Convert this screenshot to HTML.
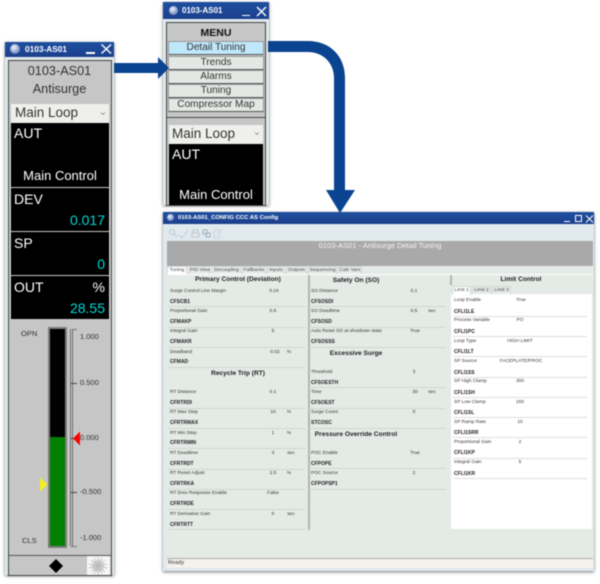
<!DOCTYPE html>
<html><head><meta charset="utf-8"><style>
html,body{margin:0;padding:0;background:#fff}
#r{position:relative;width:600px;height:584px;overflow:hidden;font-family:"Liberation Sans",sans-serif;filter:blur(.5px);background:#fff}
#r div,#r span,#r svg{position:absolute}
.t{white-space:nowrap;line-height:8px;font-size:4.8px;color:#333}
.b{font-weight:bold;color:#222;font-size:5px}
.c{transform:translateX(-50%)}
.h{white-space:nowrap;font-weight:bold;font-size:6.6px;line-height:10px;color:#222;transform:translateX(-50%)}
.l{height:1px;background:#d0d6d2}
.lw{height:1px;background:#dcdedc}
.tb{background:linear-gradient(#1f4fa0,#1b3f8c)}
.big{white-space:nowrap;color:#fff;font-size:14px;line-height:16px}
.cy{color:#00d8dc;white-space:nowrap;font-size:14px;line-height:16px}
.g{white-space:nowrap;color:#333;font-size:12.7px;line-height:15px}
.s{white-space:nowrap;color:#333;font-size:7.5px;line-height:10px}
.m{left:168px;width:96px;background:#e4e8e4;border:1px solid #9a9a9a;border-bottom-color:#555;box-sizing:border-box;height:14px;text-align:center;font-size:10.1px;line-height:12px;color:#333;white-space:nowrap}
.tab{top:266px;height:8px;background:#e6ebe7;border:1px solid #d2d7d3;border-bottom:0;box-sizing:border-box;text-align:center;font-size:4.9px;line-height:7px;color:#444;white-space:nowrap}
</style></head><body><div id="r">

<!-- LEFT WINDOW -->
<div style="left:5px;top:42px;width:109px;height:533px;background:#dfe9ee;box-shadow:0 1px 3px rgba(0,0,0,.55)"></div>
<div class="tb" style="left:5px;top:42px;width:109px;height:15px"></div>
<div style="left:10px;top:44px;width:10px;height:10px;border-radius:50%;background:radial-gradient(circle at 40% 35%,#f2f4fa,#8da0cc 55%,#4c64a6)"></div>
<span style="left:25px;top:44px;font-size:8.3px;line-height:11px;font-weight:bold;color:#fff;white-space:nowrap">0103-AS01</span>
<div style="left:86px;top:52px;width:9px;height:1.5px;background:#fff"></div>
<svg style="left:100px;top:43px" width="12" height="12"><path d="M1.5 1.5L11 10.500M11 1.500L1.500 10.500" stroke="#fff" stroke-width="1.4"/></svg>
<div style="left:9px;top:61px;width:102px;height:514px;background:#c6c6c6;box-shadow:0 0 0 1px #444"></div>
<span class="g c" style="left:59.5px;top:64px">0103-AS01</span>
<span class="g c" style="left:59.5px;top:82px">Antisurge</span>
<div style="left:11px;top:104px;width:98px;height:19px;background:#efefec"></div>
<span class="g" style="left:15px;top:105px;font-size:13.5px">Main Loop</span>
<svg style="left:100px;top:111px" width="6" height="5"><path d="M1 1.5L3 3.5L5 1.5" fill="none" stroke="#777" stroke-width=".7"/></svg>
<div style="left:11px;top:123px;width:98px;height:64px;background:#000"></div>
<span class="big" style="left:14px;top:125px">AUT</span>
<span class="big c" style="left:60px;top:168px;font-size:13px">Main Control</span>
<div style="left:11px;top:188px;width:98px;height:43px;background:#000"></div>
<span class="big" style="left:14px;top:191px">DEV</span>
<span class="cy" style="right:495px;top:212px">0.017</span>
<div style="left:11px;top:232px;width:98px;height:43px;background:#000"></div>
<span class="big" style="left:14px;top:235px">SP</span>
<span class="cy" style="right:495px;top:256px">0</span>
<div style="left:11px;top:276px;width:98px;height:43px;background:#000"></div>
<span class="big" style="left:14px;top:279px">OUT</span>
<span class="big" style="right:495px;top:279px">%</span>
<span class="cy" style="right:495px;top:300px">28.55</span>
<!-- bar -->
<div style="left:48px;top:327px;width:19px;height:221px;background:#7c7c7c"></div>
<div style="left:50px;top:329px;width:15px;height:108px;background:#000"></div>
<div style="left:50px;top:437px;width:15px;height:109px;background:#007f00"></div>
<div style="left:70px;top:329px;width:3px;height:217px;background:#d8d8d8;border-left:1px solid #666;border-right:1px solid #666;box-sizing:border-box"></div>
<div style="left:73px;top:329px;width:4px;height:1px;background:#777"></div>
<div style="left:71px;top:383px;width:6px;height:1px;background:#444"></div>
<div style="left:71px;top:438px;width:6px;height:1px;background:#444"></div>
<div style="left:71px;top:492px;width:6px;height:1px;background:#444"></div>
<div style="left:71px;top:546px;width:6px;height:1px;background:#777"></div>
<svg style="left:73px;top:431px" width="8" height="15"><path d="M0 7.5L7 .5V14.5Z" fill="#f00"/></svg>
<svg style="left:40px;top:477px" width="8" height="15"><path d="M7.5 7.5L0 .5V14.5Z" fill="#f4ee20"/></svg>
<span class="s" style="left:21px;top:329px">OPN</span>
<span class="s" style="left:22px;top:536px">CLS</span>
<span class="s" style="left:80px;top:332px">1.000</span>
<span class="s" style="left:80px;top:378px">0.500</span>
<span class="s" style="left:80px;top:433px">0.000</span>
<span class="s" style="left:80px;top:487px">-0.500</span>
<span class="s" style="left:80px;top:533px">-1.000</span>
<div style="left:9px;top:555px;width:102px;height:1px;background:#555"></div>
<svg style="left:49px;top:558px" width="15" height="16"><path d="M7 1L14 8L7 15L0 8Z" fill="#000"/></svg>
<svg style="left:87px;top:556px" width="23" height="19"><rect width="23" height="19" fill="#f6f6f6"/><g stroke="#b4b4b4" stroke-width=".8"><path d="M11 10L11 1M11 10L15 2M11 10L18 4M11 10L20 8M11 10L20 12M11 10L18 16M11 10L15 18M11 10L11 19M11 10L7 18M11 10L4 16M11 10L2 12M11 10L2 8M11 10L4 4M11 10L7 2"/></g><circle cx="11" cy="10" r="6" fill="#bdbdbd" opacity=".6"/></svg>

<!-- MIDDLE WINDOW -->
<div style="left:163px;top:2px;width:106px;height:203px;background:#dfe9ee;box-shadow:0 1px 3px rgba(0,0,0,.55)"></div>
<div class="tb" style="left:163px;top:2px;width:106px;height:17px"></div>
<div style="left:169px;top:6px;width:9px;height:9px;border-radius:50%;background:radial-gradient(circle at 40% 35%,#f2f4fa,#8da0cc 55%,#4c64a6)"></div>
<span style="left:182px;top:5px;font-size:8px;line-height:11px;font-weight:bold;color:#fff;white-space:nowrap">0103-AS01</span>
<div style="left:242px;top:14.500px;width:8px;height:1.5px;background:#fff"></div>
<svg style="left:256px;top:6px" width="11" height="11"><path d="M1 1L10 10M10 1L1 10" stroke="#fff" stroke-width="1.4"/></svg>
<div style="left:167px;top:23px;width:98px;height:182px;background:#c6c6c6;box-shadow:0 0 0 1px #444"></div>
<span class="c" style="left:216px;top:27px;font-size:10.5px;line-height:12px;font-weight:bold;color:#111">MENU</span>
<div class="m" style="top:41px;background:#bfe8fb">Detail Tuning</div>
<div class="m" style="top:56px">Trends</div>
<div class="m" style="top:70px">Alarms</div>
<div class="m" style="top:84px">Tuning</div>
<div class="m" style="top:98px">Compressor Map</div>
<div style="left:167px;top:117px;width:98px;height:1px;background:#444"></div>
<div style="left:169px;top:125px;width:94px;height:19px;background:#efefec"></div>
<span class="g" style="left:172px;top:126px;font-size:13.5px">Main Loop</span>
<svg style="left:254px;top:131px" width="6" height="5"><path d="M1 1.5L3 3.5L5 1.5" fill="none" stroke="#777" stroke-width=".7"/></svg>
<div style="left:169px;top:144px;width:94px;height:61px;background:#000"></div>
<span class="big" style="left:172px;top:146px">AUT</span>
<span class="big c" style="left:216px;top:187px;font-size:13px">Main Control</span>

<!-- ARROWS -->
<svg style="left:0;top:0" width="600" height="584"><path d="M114 63H158V57L169 68L158 79V73H114Z" fill="#0a4490"/><path d="M268 41H308C330 41 345 56 345 78V190H355L340 213L326 190H334V78C334 62 322 52 308 52H268Z" fill="#0a4490"/></svg>

<!-- CONFIG WINDOW -->
<div style="left:163px;top:212px;width:431px;height:359px;background:#dfe9ee;box-shadow:0 1px 3px rgba(0,0,0,.55)"></div>
<div class="tb" style="left:163px;top:212px;width:431px;height:12px"></div>
<div style="left:167px;top:214px;width:7px;height:7px;border-radius:50%;background:radial-gradient(circle at 40% 35%,#f2f4fa,#8da0cc 55%,#4c64a6)"></div>
<span style="left:178px;top:214px;font-size:5.9px;line-height:8px;font-weight:bold;color:#fff;white-space:nowrap">0103-AS01_CONFIG CCC AS Config</span>
<div style="left:564px;top:221px;width:6px;height:1px;background:#fff"></div>
<div style="left:575px;top:215px;width:7px;height:7px;border:1px solid #fff;box-sizing:border-box"></div>
<svg style="left:585px;top:215px" width="9" height="8"><path d="M1 .5L8 7.500M8 .5L1 7.500" stroke="#fff" stroke-width="1"/></svg>
<svg style="left:168px;top:228px" width="58" height="12"><g fill="none" stroke="#c0c8cc" stroke-width="1"><circle cx="4" cy="4" r="2.500"/><path d="M6 6L9 9"/><path d="M11 7L14 10L20 2" stroke="#c4ccd2"/><path d="M24 5H31V9H24ZM25 5V2H30V5"/><rect x="35" y="2" width="4" height="4" stroke="#9fb2c4"/><rect x="38" y="5" width="4" height="4" stroke="#9fb2c4"/><path d="M46 2H51V10H46ZM50 7L54 2" stroke="#d0d6da"/></g></svg>
<div style="left:167px;top:241px;width:426px;height:25px;background:#a9a9a9"></div>
<span class="c" style="left:380px;top:241px;font-size:7.6px;line-height:10px;color:#f4f4f4;white-space:nowrap">0103-AS01 - Antisurge Detail Tuning</span>
<div style="left:167px;top:266px;width:426px;height:292px;background:#e4eae6"></div>
<div class="tab" style="left:167px;width:20px;background:#fff;height:9px">Tuning</div>
<div class="tab" style="left:189px;width:21px">PID View</div>
<div class="tab" style="left:212px;width:29px">Decoupling</div>
<div class="tab" style="left:242px;width:24px">Fallbacks</div>
<div class="tab" style="left:267px;width:18px">Inputs</div>
<div class="tab" style="left:286px;width:21px">Outputs</div>
<div class="tab" style="left:308px;width:29px">Sequencing</div>
<div class="tab" style="left:338px;width:24px">Calc Vars</div>
<div style="left:167px;top:274px;width:426px;height:1px;background:#fff"></div>
<div style="left:308px;top:275px;width:1.500px;height:255px;background:#b0b5b2"></div>
<div style="left:450px;top:275px;width:1.500px;height:10px;background:#b0b5b2"></div>
<div style="left:451px;top:294px;width:141px;height:235px;background:#fff"></div>
<div style="left:167px;top:558px;width:426px;height:10px;background:#f5f1ec;border-top:1px solid #aaa;box-sizing:border-box"></div>
<span class="t" style="left:168px;top:559px;font-size:5.6px">Ready</span>

<!-- column 1 -->
<span class="h" style="left:238px;top:275px">Primary Control (Deviation)</span>
<span class="t" style="left:170px;top:288px">Surge Control Line Margin</span><span class="t c" style="left:274px;top:288px">0.24</span>
<span class="t b" style="left:170px;top:298px">CFSCB1</span><div class="l" style="left:168px;top:306px;width:137px"></div>
<span class="t" style="left:170px;top:308px">Proportional Gain</span><span class="t c" style="left:273px;top:308px">0.6</span>
<span class="t b" style="left:170px;top:318px">CFMAKP</span><div class="l" style="left:168px;top:327px;width:137px"></div>
<span class="t" style="left:170px;top:328px">Integral Gain</span><span class="t c" style="left:273px;top:328px">5</span>
<span class="t b" style="left:170px;top:338px">CFMAKR</span><div class="l" style="left:168px;top:347px;width:137px"></div>
<span class="t" style="left:170px;top:349px">Deadband</span><span class="t c" style="left:275px;top:349px">0.02</span><span class="t c" style="left:289px;top:349px">%</span>
<span class="t b" style="left:170px;top:358px">CFMAD</span><div class="l" style="left:168px;top:367px;width:137px"></div>
<span class="h" style="left:238px;top:369px">Recycle Trip (RT)</span>
<span class="t" style="left:170px;top:389px">RT Distance</span><span class="t c" style="left:273px;top:389px">0.1</span>
<span class="t b" style="left:170px;top:399px">CFRTRDI</span><div class="l" style="left:168px;top:408px;width:137px"></div>
<span class="t" style="left:170px;top:409px">RT Max Step</span><span class="t c" style="left:273px;top:409px">10</span><span class="t c" style="left:289px;top:409px">%</span>
<span class="t b" style="left:170px;top:419px">CFRTRMAX</span><div class="l" style="left:168px;top:428px;width:137px"></div>
<span class="t" style="left:170px;top:430px">RT Min Step</span><span class="t c" style="left:273px;top:430px">1</span><span class="t c" style="left:289px;top:430px">%</span>
<span class="t b" style="left:170px;top:439px">CFRTRMIN</span><div class="l" style="left:168px;top:448px;width:137px"></div>
<span class="t" style="left:170px;top:450px">RT Deadtime</span><span class="t c" style="left:273px;top:450px">3</span><span class="t c" style="left:291px;top:450px">sec</span>
<span class="t b" style="left:170px;top:460px">CFRTRDT</span><div class="l" style="left:168px;top:469px;width:137px"></div>
<span class="t" style="left:170px;top:470px">RT Reset Adjust</span><span class="t c" style="left:273px;top:470px">2.5</span><span class="t c" style="left:289px;top:470px">%</span>
<span class="t b" style="left:170px;top:480px">CFRTRKA</span><div class="l" style="left:168px;top:489px;width:137px"></div>
<span class="t" style="left:170px;top:490px">RT Drev Response Enable</span><span class="t c" style="left:273px;top:490px">False</span>
<span class="t b" style="left:170px;top:500px">CFRTRDE</span><div class="l" style="left:168px;top:509px;width:137px"></div>
<span class="t" style="left:170px;top:511px">RT Derivative Gain</span><span class="t c" style="left:273px;top:511px">0</span><span class="t c" style="left:291px;top:511px">sec</span>
<span class="t b" style="left:170px;top:521px">CFRTRTT</span><div class="l" style="left:168px;top:529px;width:137px"></div>

<!-- column 2 -->
<span class="h" style="left:356px;top:276px">Safety On (SO)</span>
<span class="t" style="left:311px;top:288px">SO Distance</span><span class="t c" style="left:414px;top:288px">0.1</span>
<span class="t b" style="left:311px;top:298px">CFSOSDI</span><div class="l" style="left:309px;top:306px;width:137px"></div>
<span class="t" style="left:311px;top:308px">SO Deadtime</span><span class="t c" style="left:414px;top:308px">0.5</span><span class="t c" style="left:432px;top:308px">sec</span>
<span class="t b" style="left:311px;top:318px">CFSOSD</span><div class="l" style="left:309px;top:327px;width:137px"></div>
<span class="t" style="left:311px;top:328px">Auto Reset SO at shutdown state</span><span class="t c" style="left:415px;top:328px">True</span>
<span class="t b" style="left:311px;top:338px">CFSOSSS</span><div class="l" style="left:309px;top:347px;width:137px"></div>
<span class="h" style="left:356px;top:349px">Excessive Surge</span>
<span class="t" style="left:311px;top:369px">Threshold</span><span class="t c" style="left:414px;top:369px">3</span>
<span class="t b" style="left:311px;top:379px">CFSOESTH</span><div class="l" style="left:309px;top:387px;width:137px"></div>
<span class="t" style="left:311px;top:389px">Time</span><span class="t c" style="left:415px;top:389px">30</span><span class="t c" style="left:432px;top:389px">sec</span>
<span class="t b" style="left:311px;top:399px">CFSOEST</span><div class="l" style="left:309px;top:408px;width:137px"></div>
<span class="t" style="left:311px;top:409px">Surge Count</span><span class="t c" style="left:414px;top:409px">0</span>
<span class="t b" style="left:311px;top:419px">STCOSC</span><div class="l" style="left:309px;top:428px;width:137px"></div>
<span class="h" style="left:356px;top:430px">Pressure Override Control</span>
<span class="t" style="left:311px;top:450px">POC Enable</span><span class="t c" style="left:415px;top:450px">True</span>
<span class="t b" style="left:311px;top:460px">CFPOPE</span><div class="l" style="left:309px;top:468px;width:137px"></div>
<span class="t" style="left:311px;top:470px">POC Source</span><span class="t c" style="left:414px;top:470px">2</span>
<span class="t b" style="left:311px;top:480px">CFPOPSP1</span><div class="l" style="left:309px;top:489px;width:137px"></div>

<!-- column 3 -->
<span class="h" style="left:521px;top:275px">Limit Control</span>
<div class="tab" style="left:452px;top:286px;width:19px;background:#fff;height:9px">Limit 1</div>
<div class="tab" style="left:472px;top:286px;width:19px">Limit 2</div>
<div class="tab" style="left:492px;top:286px;width:19px">Limit 3</div>
<span class="t" style="left:454px;top:297px">Loop Enable</span><span class="t c" style="left:521px;top:297px">True</span>
<span class="t b" style="left:454px;top:308px">CFLI1LE</span><div class="lw" style="left:453px;top:316px;width:134px"></div>
<span class="t" style="left:454px;top:317px">Process Variable</span><span class="t c" style="left:520px;top:317px">PO</span>
<span class="t b" style="left:454px;top:328px">CFLI1PC</span><div class="lw" style="left:453px;top:336px;width:134px"></div>
<span class="t" style="left:454px;top:338px">Loop Type</span><span class="t c" style="left:520px;top:338px">HIGH LIMIT</span>
<span class="t b" style="left:454px;top:348px">CFLI1LT</span><div class="lw" style="left:453px;top:356px;width:134px"></div>
<span class="t" style="left:454px;top:358px">SP Source</span><span class="t c" style="left:521px;top:358px">FACEPLATE/PROC</span>
<span class="t b" style="left:454px;top:369px">CFLI1SS</span><div class="lw" style="left:453px;top:377px;width:134px"></div>
<span class="t" style="left:454px;top:378px">SP High Clamp</span><span class="t c" style="left:520px;top:378px">300</span>
<span class="t b" style="left:454px;top:389px">CFLI1SH</span><div class="lw" style="left:453px;top:397px;width:134px"></div>
<span class="t" style="left:454px;top:399px">SP Low Clamp</span><span class="t c" style="left:520px;top:399px">150</span>
<span class="t b" style="left:454px;top:409px">CFLI1SL</span><div class="lw" style="left:453px;top:417px;width:134px"></div>
<span class="t" style="left:454px;top:419px">SP Ramp Rate</span><span class="t c" style="left:520px;top:419px">10</span>
<span class="t b" style="left:454px;top:429px">CFLI1SRR</span><div class="lw" style="left:453px;top:437px;width:134px"></div>
<span class="t" style="left:454px;top:439px">Proportional Gain</span><span class="t c" style="left:520px;top:439px">2</span>
<span class="t b" style="left:454px;top:449px">CFLI1KP</span><div class="lw" style="left:453px;top:458px;width:134px"></div>
<span class="t" style="left:454px;top:459px">Integral Gain</span><span class="t c" style="left:520px;top:459px">5</span>
<span class="t b" style="left:454px;top:470px">CFLI1KR</span><div class="lw" style="left:453px;top:478px;width:134px"></div>

</div></body></html>
